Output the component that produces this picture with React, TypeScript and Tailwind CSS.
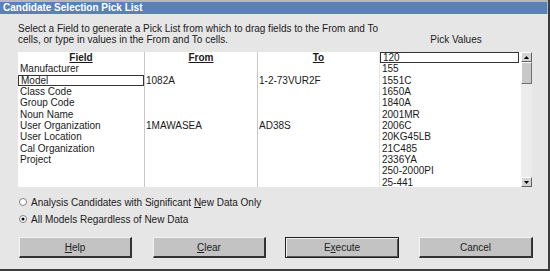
import React from 'react';

const rows: [string, string, string][] = [
  ['Manufacturer', '', ''],
  ['Model', '1082A', '1-2-73VUR2F'],
  ['Class Code', '', ''],
  ['Group Code', '', ''],
  ['Noun Name', '', ''],
  ['User Organization', '1MAWASEA', 'AD38S'],
  ['User Location', '', ''],
  ['Cal Organization', '', ''],
  ['Project', '', ''],
];

const pickValues = ['120', '155', '1551C', '1650A', '1840A', '2001MR', '2006C', '20KG45LB', '21C485', '2336YA', '250-2000PI', '25-441'];

const Radio = ({ checked }: { checked?: boolean }) => (
  <svg width="8" height="8" viewBox="0 0 8 8" className="shrink-0">
    <circle cx="4" cy="4" r="3.5" fill="#fff" stroke="#808080" strokeWidth="1" />
    {checked && <circle cx="4" cy="4" r="1.5" fill="#000" />}
  </svg>
);

const Arrow = ({ down }: { down?: boolean }) => (
  <div className="flex h-[10px] w-[11px] items-center justify-center border-b border-r border-t border-l border-b-[#606060] border-l-white border-r-[#606060] border-t-white bg-[#d4d4d4]">
    <svg width="5" height="3" viewBox="0 0 5 3">
      <path d={down ? 'M0 0h5L2.5 3z' : 'M2.5 0L5 3H0z'} fill="#000" />
    </svg>
  </div>
);

const Button = ({ children, primary, className }: { children: React.ReactNode; primary?: boolean; className?: string }) => (
  <div
    className={`flex h-[21px] items-center justify-center bg-[#c3c3c3] text-[10px] text-[#222] ${
      primary
        ? 'border border-[#202020] shadow-[inset_1px_1px_0_#f0f0f0,inset_-1px_-1px_0_#555]'
        : 'border-b-2 border-r-2 border-b-[#333] border-r-[#333] border-t border-l border-t-[#f2f2f2] border-l-[#f2f2f2]'
    } ${className ?? ''}`}
  >
    {children}
  </div>
);

const App = () => {
  return (
    <div
      className="flex h-[271px] w-[550px] flex-col overflow-hidden border-b-[2px] border-r-[2px] border-[#3c3c3c] bg-[#e6e6e6] text-[10px] text-[#1a1a1a]"
      style={{ fontFamily: '"Liberation Sans", Arial, sans-serif' }}
    >
      <div className="border-r border-t-2 border-[#b8b8b8]">
        <div className="flex h-[12px] items-center bg-[#5b80b6] pl-[3px] text-[10px] font-bold leading-[12px] text-white">
          Candidate Selection Pick List
        </div>
      </div>

      <div className="flex flex-1 flex-col pl-[18px]">
        <div className="mt-[9px] flex leading-[11px]">
          <div className="w-[362px]">
            <div>Select a Field to generate a Pick List from which to drag fields to the From and To</div>
            <div>cells, or type in values in the From and To cells.</div>
          </div>
          <div className="w-[152px] pt-[11px] text-center">Pick Values</div>
        </div>

        <div className="mt-[7px] flex h-[135px]">
          <div className="flex w-[361px] bg-white leading-[11.33px]">
            <div className="flex w-[127px] flex-col border-r border-[#c8c8c8]">
              <div className="h-[11.33px] text-center font-bold underline">Field</div>
              {rows.map(([f]) => (
                <div
                  key={f}
                  className={`h-[11.33px] pl-[2px] ${f === 'Model' ? 'border border-[#333] pl-[1px] leading-[9.33px]' : ''}`}
                >
                  {f}
                </div>
              ))}
            </div>
            <div className="flex w-[113px] flex-col border-r border-[#c8c8c8]">
              <div className="h-[11.33px] text-center font-bold underline">From</div>
              {rows.map(([f, from]) => (
                <div key={f} className="h-[11.33px] pl-[1px]">
                  {from}
                </div>
              ))}
            </div>
            <div className="flex flex-1 flex-col">
              <div className="h-[11.33px] text-center font-bold underline">To</div>
              {rows.map(([f, , to]) => (
                <div key={f} className="h-[11.33px] pl-[1px]">
                  {to}
                </div>
              ))}
            </div>
          </div>

          <div className="ml-[1px] flex w-[152px] bg-white">
            <div className="flex flex-1 flex-col leading-[11.33px]">
              {pickValues.map((v, i) => (
                <div
                  key={v}
                  className={`h-[11.33px] pl-[2px] ${i === 0 ? 'mr-[2px] border border-[#333] pl-[1px] leading-[9.33px]' : ''}`}
                >
                  {v}
                </div>
              ))}
            </div>
            <div className="flex w-[11px] flex-col bg-[#ececec]">
              <Arrow />
              <div className="h-[22px] border-b border-r border-t border-l border-b-[#707070] border-l-white border-r-[#707070] border-t-white bg-[#c8c8c8]" />
              <div className="flex-1" />
              <Arrow down />
            </div>
          </div>
        </div>

        <div className="mt-[9px] flex h-[12px] items-center gap-[4px] pl-[1px]">
          <Radio />
          <span>
            Analysis Candidates with Significant <u>N</u>ew Data Only
          </span>
        </div>
        <div className="mt-[5px] flex h-[12px] items-center gap-[4px] pl-[1px]">
          <Radio checked />
          <span>All Models Regardless of New Data</span>
        </div>

        <div className="mt-[12px] flex pl-[1px]">
          <Button className="w-[113px]">
            <span>
              <u>H</u>elp
            </span>
          </Button>
          <Button className="ml-[21px] w-[113px]">
            <span>
              <u>C</u>lear
            </span>
          </Button>
          <Button primary className="ml-[19px] w-[114px]">
            <span>
              E<u>x</u>ecute
            </span>
          </Button>
          <Button className="ml-[20px] w-[114px]">
            <span>Cancel</span>
          </Button>
        </div>
      </div>
    </div>
  );
};

export default App;
